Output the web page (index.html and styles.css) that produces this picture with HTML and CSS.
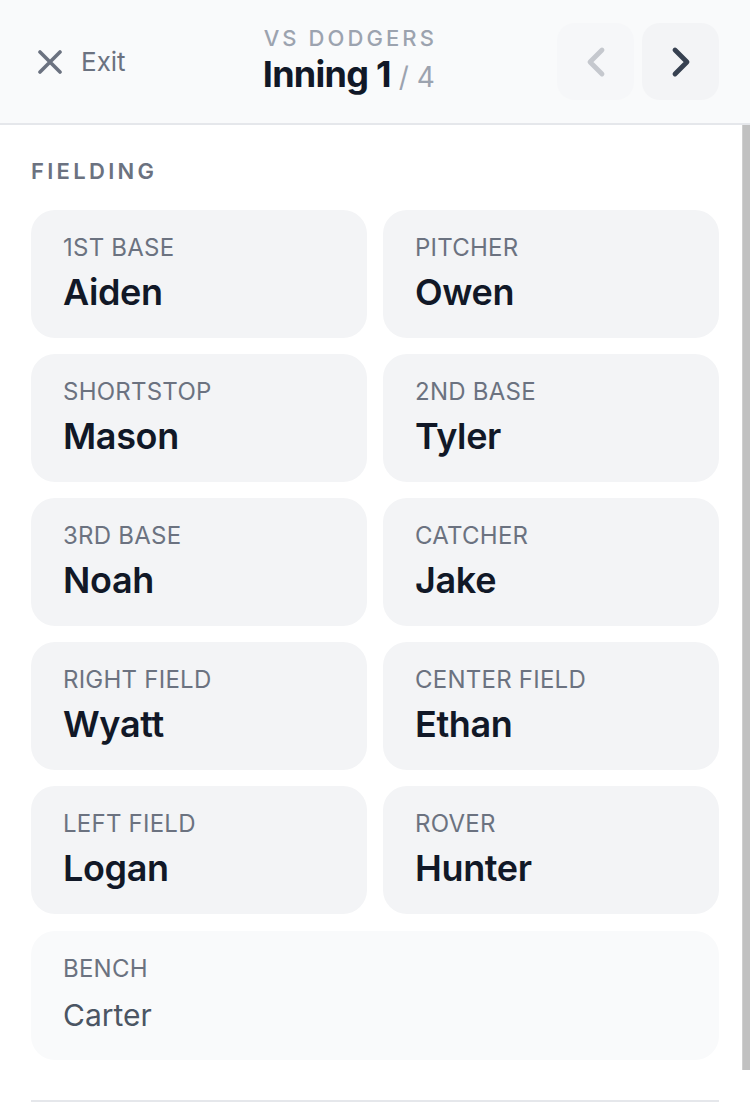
FILE: index.html
```html
<!DOCTYPE html>
<html lang="en">
<head>
<meta charset="utf-8">
<title>Inning 1</title>
<link rel="stylesheet" href="styles.css">
</head>
<body>
<div class="app">
  <header class="topbar">
    <button class="exit" type="button">
      <svg class="exit-icon" viewBox="0 0 24 24" width="24" height="24" aria-hidden="true">
        <path d="M2 2 22 22M22 2 2 22" fill="none" stroke="currentColor" stroke-width="3.6" stroke-linecap="round"/>
      </svg>
      <span>Exit</span>
    </button>
    <div class="title">
      <div class="opponent">VS DODGERS</div>
      <div class="inning"><strong>Inning 1</strong><span class="of"> / 4</span></div>
    </div>
    <div class="nav">
      <button class="nav-btn disabled" type="button" aria-label="Previous inning">
        <svg viewBox="0 0 24 24" width="48" height="48" aria-hidden="true"><path d="m15 18-6-6 6-6" fill="none" stroke="currentColor" stroke-width="2.4" stroke-linecap="round" stroke-linejoin="round"/></svg>
      </button>
      <button class="nav-btn" type="button" aria-label="Next inning">
        <svg viewBox="0 0 24 24" width="48" height="48" aria-hidden="true"><path d="m9 18 6-6-6-6" fill="none" stroke="currentColor" stroke-width="2.4" stroke-linecap="round" stroke-linejoin="round"/></svg>
      </button>
    </div>
  </header>
  <main class="content">
    <h2 class="section-title">FIELDING</h2>
    <div class="grid">
      <div class="card"><div class="pos">1ST BASE</div><div class="name">Aiden</div></div>
      <div class="card"><div class="pos">PITCHER</div><div class="name">Owen</div></div>
      <div class="card"><div class="pos">SHORTSTOP</div><div class="name">Mason</div></div>
      <div class="card"><div class="pos">2ND BASE</div><div class="name">Tyler</div></div>
      <div class="card"><div class="pos">3RD BASE</div><div class="name">Noah</div></div>
      <div class="card"><div class="pos">CATCHER</div><div class="name">Jake</div></div>
      <div class="card"><div class="pos">RIGHT FIELD</div><div class="name">Wyatt</div></div>
      <div class="card"><div class="pos">CENTER FIELD</div><div class="name">Ethan</div></div>
      <div class="card"><div class="pos">LEFT FIELD</div><div class="name">Logan</div></div>
      <div class="card"><div class="pos">ROVER</div><div class="name">Hunter</div></div>
    </div>
    <div class="bench">
      <div class="pos">BENCH</div>
      <div class="bench-names">Carter</div>
    </div>
    <hr class="divider">
  </main>
  <div class="scroll-thumb" aria-hidden="true"></div>
</div>
</body>
</html>
```

FILE: styles.css
```css
* { box-sizing: border-box; }
html, body { margin: 0; padding: 0; height: 100%; }
body {
  font-family: Inter, "Noto Sans", "Liberation Sans", sans-serif;
  background: #ffffff;
  overflow: hidden;
}
.app {
  position: relative;
  height: 1119px;
  display: flex;
  flex-direction: column;
}

.topbar {
  height: 125px;
  flex: none;
  background: #f9fafb;
  border-bottom: 2px solid #e5e7eb;
  display: flex;
  align-items: center;
  padding: 0 31px;
}
.exit {
  display: flex;
  align-items: center;
  gap: 19px;
  padding: 8px 15px 8px 7px;
  border: 0;
  background: transparent;
  color: #6b7280;
  font-family: inherit;
  font-size: 26px;
  line-height: 32px;
  cursor: pointer;
}
.exit-icon { display: block; }
.title { flex: 1; text-align: center; margin-top: 2px; }
.opponent {
  font-size: 22px;
  line-height: 28px;
  letter-spacing: 0.14em;
  color: #9ca3af;
  font-weight: 500;
  margin-right: -3px;
}
.inning { margin-top: 2px; line-height: 40px; }
.inning strong {
  font-size: 36px;
  font-weight: 700;
  color: #111827;
  letter-spacing: -0.02em;
}
.inning .of { font-size: 28px; color: #9ca3af; font-weight: 400; }

.nav { display: flex; gap: 8px; }
.nav-btn {
  width: 77px;
  height: 77px;
  border: 0;
  border-radius: 18px;
  background: #f3f4f6;
  color: #374151;
  display: flex;
  align-items: center;
  justify-content: center;
  padding: 0;
}
.nav-btn.disabled { background: #f6f7f9; color: #c5c8ce; }
.nav-btn svg { display: block; }

.content {
  flex: 1;
  overflow: hidden;
  padding: 32px 31px 70px 31px;
}
.scroll-thumb {
  position: absolute;
  right: 0;
  top: 125px;
  width: 8px;
  height: 945px;
  background: #c1c1c1;
  border-left: 1px solid #cfcfcf;
}

.section-title {
  margin: 0 0 25px;
  font-size: 22px;
  line-height: 28px;
  font-weight: 600;
  letter-spacing: 0.15em;
  color: #6b7280;
}
.grid {
  display: grid;
  grid-template-columns: 1fr 1fr;
  gap: 16px;
}
.card {
  background: #f3f4f6;
  border-radius: 24px;
  height: 128px;
  padding: 24px 32px;
}
.pos {
  font-size: 24px;
  line-height: 28px;
  color: #6b7280;
  letter-spacing: 0.01em;
}
.name {
  margin-top: 8px;
  font-size: 36px;
  line-height: 44px;
  font-weight: 600;
  color: #111827;
  letter-spacing: -0.01em;
}
.bench {
  margin-top: 17px;
  background: #f9fafb;
  border-radius: 24px;
  height: 129px;
  padding: 24px 32px;
}
.bench-names {
  margin-top: 12px;
  font-size: 30px;
  line-height: 41px;
  color: #4b5563;
}
.divider {
  margin: 40px 0 0;
  border: 0;
  border-top: 2px solid #e5e7eb;
}
```
